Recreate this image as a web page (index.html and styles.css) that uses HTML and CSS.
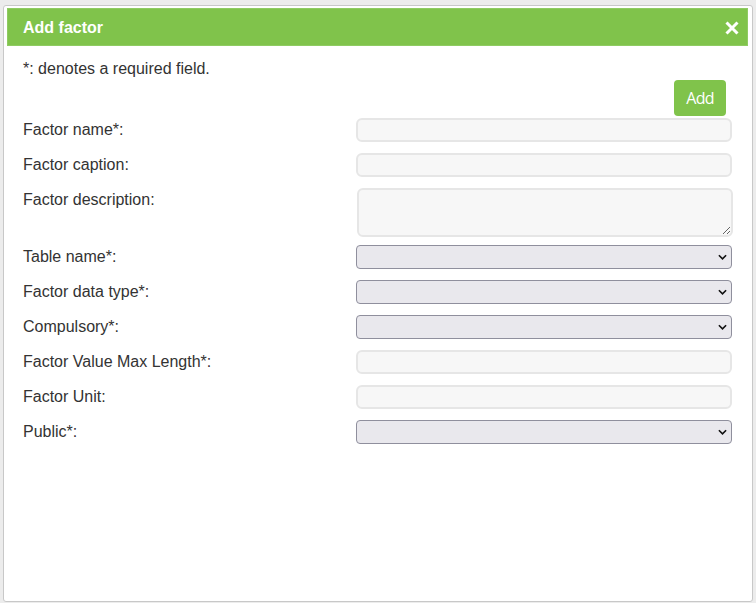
FILE: index.html
```html
<!DOCTYPE html>
<html lang="en">
<head>
<meta charset="utf-8">
<title>Add factor</title>
<link rel="stylesheet" href="styles.css">
</head>
<body>
  <div class="dialog">
    <div class="titlebar">
      <span class="title">Add factor</span>
      <svg class="close" viewBox="0 0 14 14"><path d="M1.5 1.5l11 11M12.5 1.5l-11 11"/></svg>
    </div>
    <div class="content">
      <p class="note">*: denotes a required field.</p>
      <div class="actions"><button class="btn-add">Add</button></div>

      <div class="row"><label>Factor name*:</label><input class="field" type="text"></div>
      <div class="row"><label>Factor caption:</label><input class="field" type="text"></div>
      <div class="row row-area"><label>Factor description:</label><textarea class="field area"></textarea></div>
      <div class="row"><label>Table name*:</label><div class="pick"><select></select><svg viewBox="0 0 10 6"><path d="M1 1l4 4 4-4"/></svg></div></div>
      <div class="row"><label>Factor data type*:</label><div class="pick"><select></select><svg viewBox="0 0 10 6"><path d="M1 1l4 4 4-4"/></svg></div></div>
      <div class="row"><label>Compulsory*:</label><div class="pick"><select></select><svg viewBox="0 0 10 6"><path d="M1 1l4 4 4-4"/></svg></div></div>
      <div class="row"><label>Factor Value Max Length*:</label><input class="field" type="text"></div>
      <div class="row"><label>Factor Unit:</label><input class="field" type="text"></div>
      <div class="row"><label>Public*:</label><div class="pick"><select></select><svg viewBox="0 0 10 6"><path d="M1 1l4 4 4-4"/></svg></div></div>
    </div>
  </div>
</body>
</html>
```

FILE: styles.css
```css
* {
  margin: 0;
  padding: 0;
  box-sizing: border-box;
}
body {
  font-family: "Liberation Sans", Arial, sans-serif;
  background-color: #ececec;
  color: #333333;
  font-size: 16px;
  overflow: hidden;
}

.dialog {
  margin: 5px 0 0 3px;
  width: 750px;
  height: 597px;
  background-color: #ffffff;
  border: 1px solid #c8c8c8;
  border-radius: 3px;
  padding: 2px 4px 0 3px;
}
.titlebar {
  height: 38px;
  background-color: #80c34b;
  border: 1px solid #8fcb62;
  color: #ffffff;
  display: flex;
  align-items: center;
  justify-content: space-between;
  padding: 1px 8px 0 15px;
}
.title {
  font-weight: bold;
  font-size: 16px;
}
.close {
  width: 14px;
  height: 14px;
  fill: none;
  stroke: #ffffff;
  stroke-width: 3;
}

.content {
  padding: 14px 16px 0 16px;
}
.note {
  line-height: 18px;
}
.actions {
  display: flex;
  justify-content: flex-end;
  padding: 2px 6px 0 0;
  margin-bottom: 2px;
}
.btn-add {
  width: 52px;
  height: 36px;
  border: none;
  border-radius: 4px;
  background-color: #80c34b;
  color: #ffffff;
  font-family: "Open Sans", sans-serif;
  font-size: 16px;
  letter-spacing: -0.8px;
}

.row {
  display: grid;
  grid-template-columns: 333px 1fr;
  align-items: start;
  margin-bottom: 11px;
}
.row-area {
  margin-bottom: 8px;
}
.row label {
  padding-top: 3px;
  line-height: 18px;
}
.field {
  width: 100%;
  height: 24px;
  background-color: #f7f7f7;
  border: 2px solid #e6e6e6;
  border-radius: 6px;
  outline: none;
}
.area {
  height: 49px;
  resize: vertical;
  display: block;
  margin-left: 1px;
}

.pick {
  position: relative;
  height: 24px;
}
.pick select {
  appearance: none;
  display: block;
  width: 100%;
  height: 24px;
  background-color: #e9e8ed;
  border: 1px solid #8f8f9d;
  border-radius: 4px;
}
.pick svg {
  position: absolute;
  right: 5px;
  top: 9px;
  width: 9px;
  height: 6px;
  fill: none;
  stroke: #111111;
  stroke-width: 1.8;
}
```
